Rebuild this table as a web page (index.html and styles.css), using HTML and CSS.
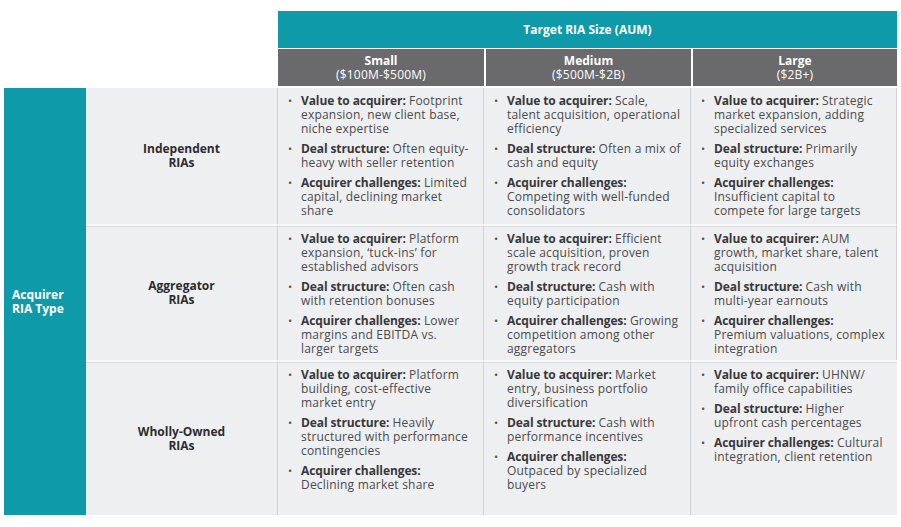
FILE: index.html
```html
<!DOCTYPE html>
<html lang="en">
<head>
<meta charset="utf-8">
<title>Acquirer RIA Type vs Target RIA Size</title>
<link rel="stylesheet" href="styles.css">
</head>
<body>
<div class="chart">
  <div class="corner"></div>
  <div class="top-head">Target RIA Size (AUM)</div>
  <div class="size-head"><strong>Small</strong><span>($100M-$500M)</span></div>
  <div class="size-head sep"><strong>Medium</strong><span>($500M-$2B)</span></div>
  <div class="size-head sep"><strong>Large</strong><span>($2B+)</span></div>

  <div class="side-head">Acquirer RIA Type</div>

  <div class="row-label">Independent<br>RIAs</div>
  <div class="cell">
    <ul>
      <li><span><b>Value to acquirer:</b> Footprint expansion, new client base, niche expertise</span></li>
      <li><span><b>Deal structure:</b> Often equity-heavy with seller retention</span></li>
      <li><span><b>Acquirer challenges:</b> Limited capital, declining market share</span></li>
    </ul>
  </div>
  <div class="cell mid">
    <ul>
      <li><span><b>Value to acquirer:</b> Scale, talent acquisition, operational efficiency</span></li>
      <li><span><b>Deal structure:</b> Often a mix of cash and equity</span></li>
      <li><span><b>Acquirer challenges:</b> Competing with well-funded consolidators</span></li>
    </ul>
  </div>
  <div class="cell">
    <ul>
      <li><span><b>Value to acquirer:</b> Strategic market expansion, adding specialized services</span></li>
      <li><span><b>Deal structure:</b> Primarily equity exchanges</span></li>
      <li><span><b>Acquirer challenges:</b> Insufficient capital to compete for large targets</span></li>
    </ul>
  </div>

  <div class="row-label next">Aggregator<br>RIAs</div>
  <div class="cell next">
    <ul>
      <li><span><b>Value to acquirer:</b> Platform expansion, ‘tuck-ins’ for established advisors</span></li>
      <li><span><b>Deal structure:</b> Often cash with retention bonuses</span></li>
      <li><span><b>Acquirer challenges:</b> Lower margins and EBITDA vs. larger targets</span></li>
    </ul>
  </div>
  <div class="cell mid next">
    <ul>
      <li><span><b>Value to acquirer:</b> Efficient scale acquisition, proven growth track record</span></li>
      <li><span><b>Deal structure:</b> Cash with equity participation</span></li>
      <li><span><b>Acquirer challenges:</b> Growing competition among other aggregators</span></li>
    </ul>
  </div>
  <div class="cell next">
    <ul>
      <li><span><b>Value to acquirer:</b> AUM growth, market share, talent acquisition</span></li>
      <li><span><b>Deal structure:</b> Cash with multi-year earnouts</span></li>
      <li><span><b>Acquirer challenges:</b> Premium valuations, complex integration</span></li>
    </ul>
  </div>

  <div class="row-label next">Wholly-Owned<br>RIAs</div>
  <div class="cell next">
    <ul>
      <li><span><b>Value to acquirer:</b> Platform building, cost-effective market entry</span></li>
      <li><span><b>Deal structure:</b> Heavily structured with performance contingencies</span></li>
      <li><span><b>Acquirer challenges:</b> Declining market share</span></li>
    </ul>
  </div>
  <div class="cell mid next">
    <ul>
      <li><span><b>Value to acquirer:</b> Market entry, business portfolio diversification</span></li>
      <li><span><b>Deal structure:</b> Cash with performance incentives</span></li>
      <li><span><b>Acquirer challenges:</b> Outpaced by specialized buyers</span></li>
    </ul>
  </div>
  <div class="cell next">
    <ul>
      <li><span><b>Value to acquirer:</b> UHNW/ family office capabilities</span></li>
      <li><span><b>Deal structure:</b> Higher upfront cash percentages</span></li>
      <li><span><b>Acquirer challenges:</b> Cultural integration, client retention</span></li>
    </ul>
  </div>
</div>
</body>
</html>
```
FILE: styles.css
```css
* { box-sizing: border-box; }
html, body { margin: 0; padding: 0; background: #ffffff; }
body {
  font-family: "Open Sans", "Noto Sans", sans-serif;
  font-size: 12px;
  line-height: 14px;
  color: #4a4a4c;
}
.chart {
  display: grid;
  grid-template-columns: 82px 192px 206px 207px 206px;
  grid-template-rows: 38px 39px 136px 136px 155px;
  padding: 11px 4px 0 4px;
  width: 901px;
}
.corner { grid-column: 1 / 3; grid-row: 1 / 3; }
.top-head {
  grid-column: 3 / 6;
  background: #0f9aaa;
  border-bottom: 1px solid #ffffff;
  color: #ffffff;
  font-weight: 700;
  display: flex;
  align-items: center;
  justify-content: center;
}
.size-head {
  background: #6a6a6c;
  border-bottom: 2px solid #ffffff;
  color: #ffffff;
  display: flex;
  flex-direction: column;
  align-items: center;
  justify-content: center;
  padding-top: 1px;
  letter-spacing: 0.2px;
}
.size-head strong { font-weight: 700; letter-spacing: 0; }
.size-head.sep { border-left: 2px solid #ffffff; }
.side-head {
  grid-column: 1;
  grid-row: 3 / 6;
  background: #0f9aaa;
  color: #ffffff;
  font-weight: 700;
  display: flex;
  align-items: center;
  padding: 0 14px 0 8px;
}
.row-label {
  background: #eeeff1;
  color: #2c2c2e;
  font-weight: 700;
  display: flex;
  align-items: center;
  justify-content: center;
  text-align: center;
  border-right: 1px solid #d2d3d6;
}
.cell {
  background: #eeeff1;
  border-right: 1px solid #d2d3d6;
  padding: 6px 10px 0 10px;
  letter-spacing: 0.2px;
}
.cell.mid { padding-right: 7px; }
.cell:last-child { border-right: none; }
.next { border-top: 2px solid #f8f8f9; box-shadow: inset 0 1px 0 #dcdde0; }
.cell ul { list-style: none; margin: 0; padding: 0; }
.cell li { display: flex; margin-bottom: 6px; }
.cell li::before {
  content: "•";
  flex: 0 0 13px;
  color: #555557;
  font-size: 11px;
}
.cell b { font-weight: 700; color: #38383a; letter-spacing: -0.1px; }
```
